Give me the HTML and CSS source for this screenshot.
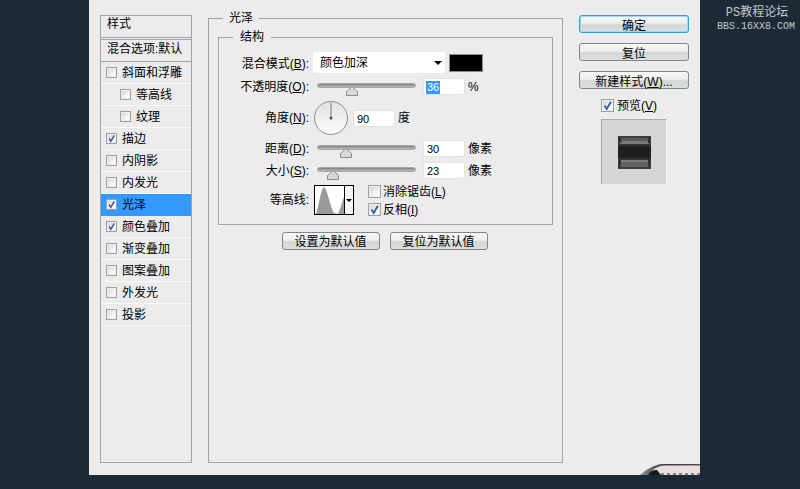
FILE: index.html
```html
<!DOCTYPE html>
<html lang="zh">
<head>
<meta charset="utf-8">
<title>图层样式</title>
<link rel="stylesheet" href="styles.css">
</head>
<body>
<svg class="defs" width="0" height="0" aria-hidden="true">
  <symbol id="tick" viewBox="0 0 13 13"><path d="M3 6.5 L5.6 10.5 L10.5 2" fill="none" stroke="#3f5aa5" stroke-width="2.2"/></symbol>
  <symbol id="thumb" viewBox="0 0 12 10"><path d="M6 .5 L11.5 5.5 V9.5 H.5 V5.5 Z" fill="#d8d8d8" stroke="#8a8a8a"/></symbol>
</svg>
<main class="dialog">
  <nav class="styles">
    <div class="styles-title">样式</div>
    <div class="styles-blend">混合选项:默认</div>
    <div class="style-row"><span class="check"></span>斜面和浮雕</div>
    <div class="style-row sub"><span class="check"></span>等高线</div>
    <div class="style-row sub"><span class="check"></span>纹理</div>
    <div class="style-row"><span class="check"><svg><use href="#tick"/></svg></span>描边</div>
    <div class="style-row"><span class="check"></span>内阴影</div>
    <div class="style-row"><span class="check"></span>内发光</div>
    <div class="style-row active"><span class="check"><svg><use href="#tick"/></svg></span>光泽</div>
    <div class="style-row"><span class="check"><svg><use href="#tick"/></svg></span>颜色叠加</div>
    <div class="style-row"><span class="check"></span>渐变叠加</div>
    <div class="style-row"><span class="check"></span>图案叠加</div>
    <div class="style-row"><span class="check"></span>外发光</div>
    <div class="style-row"><span class="check"></span>投影</div>
  </nav>

  <section class="outer">
    <h2 class="legend legend-outer">光泽</h2>
    <div class="inner">
      <h3 class="legend legend-inner">结构</h3>
      <div class="row row-mode">
        <label class="lbl">混合模式(<u>B</u>):</label>
        <div class="select">颜色加深<span class="caret"></span></div>
        <span class="swatch"></span>
      </div>
      <div class="row row-opacity">
        <label class="lbl">不透明度(<u>O</u>):</label>
        <div class="slider"><svg class="thumb" style="left:28px"><use href="#thumb"/></svg></div>
        <div class="field"><span class="sel">36</span></div>
        <span class="unit">%</span>
      </div>
      <div class="row row-angle">
        <label class="lbl">角度(<u>N</u>):</label>
        <svg class="dial" width="36" height="36" viewBox="0 0 36 36">
          <defs><linearGradient id="dg" x1="0" y1="0" x2="0" y2="1"><stop offset="0" stop-color="#e2e2e2"/><stop offset="1" stop-color="#fdfdfd"/></linearGradient></defs>
          <circle cx="18" cy="18" r="16.5" fill="url(#dg)" stroke="#8f8f8f"/>
          <path d="M18 18 V3" stroke="#777" stroke-width="1"/>
          <circle cx="18" cy="18" r="1.6" fill="#555"/>
        </svg>
        <div class="field field-angle">90</div>
        <span class="unit">度</span>
      </div>
      <div class="row row-distance">
        <label class="lbl">距离(<u>D</u>):</label>
        <div class="slider"><svg class="thumb" style="left:22px"><use href="#thumb"/></svg></div>
        <div class="field">30</div>
        <span class="unit">像素</span>
      </div>
      <div class="row row-size">
        <label class="lbl">大小(<u>S</u>):</label>
        <div class="slider"><svg class="thumb" style="left:9px"><use href="#thumb"/></svg></div>
        <div class="field">23</div>
        <span class="unit">像素</span>
      </div>
      <div class="row row-contour">
        <label class="lbl">等高线:</label>
        <div class="contour">
          <svg class="contour-graph" width="29" height="28" viewBox="0 0 29 28"><path d="M1 28 C4 20 6 2 9 1 C12 2 15 20 19 27 L23 28 C25 24 27 16 29 11 V28 Z" fill="#9b9b9b"/></svg>
          <span class="contour-drop"><span class="caret caret-small"></span></span>
        </div>
        <div class="checks">
          <div class="check-line"><span class="check"></span><span>消除锯齿(<u>L</u>)</span></div>
          <div class="check-line"><span class="check"><svg><use href="#tick"/></svg></span><span>反相(<u>I</u>)</span></div>
        </div>
      </div>
    </div>
    <div class="defaults">
      <button class="btn">设置为默认值</button>
      <button class="btn">复位为默认值</button>
    </div>
  </section>

  <aside class="actions">
    <button class="btn btn-primary">确定</button>
    <button class="btn">复位</button>
    <button class="btn">新建样式(<u>W</u>)...</button>
    <div class="preview-line"><span class="check"><svg><use href="#tick"/></svg></span><span>预览(<u>V</u>)</span></div>
    <div class="preview">
      <svg width="33" height="33" viewBox="0 0 33 33">
        <rect width="33" height="33" fill="#3c3c3c"/>
        <rect x="3" y="2" width="27" height="3" fill="#5a5a5a"/>
        <rect x="2" y="5" width="29" height="3" fill="#7a7a7a"/>
        <rect x="1" y="8" width="31" height="2" fill="#333"/>
        <rect x="0" y="10" width="33" height="12" fill="#1f1f1f"/>
        <rect x="1" y="22" width="31" height="2" fill="#333"/>
        <rect x="2" y="24" width="29" height="2" fill="#7c7c7c"/>
        <rect x="3" y="26" width="27" height="5" fill="#636363"/>
        <path d="M1 1 L3 7 M32 1 L30 7 M1 29 L3 23 M32 29 L30 23" stroke="#222" fill="none"/>
      </svg>
    </div>
  </aside>

  <svg class="corner" width="60" height="11" viewBox="0 0 60 11">
    <defs><linearGradient id="cg" x1="0" y1="0" x2="1" y2="0"><stop offset="0" stop-color="#8d8d8d"/><stop offset=".4" stop-color="#3c3c3c"/><stop offset="1" stop-color="#555"/></linearGradient></defs>
    <path d="M0 11 C6 6 13 1 22 0 H60 V11 Z" fill="url(#cg)"/>
    <path d="M8 11 C12 6 17 2 24 1.5 H60 V11 Z" fill="#ebe0e1"/>
    <path d="M8 11 C10 7 13 6 17 6 L21 11 Z" fill="#121a22"/>
    <path d="M21 10 H60" stroke="#86808a" stroke-width="2" stroke-dasharray="3 3"/>
  </svg>
</main>
<div class="mark">
  <div class="mark-a">PS教程论坛</div>
  <div class="mark-b">BBS.16XX8.COM</div>
</div>
</body>
</html>
```
FILE: styles.css
```css
* { box-sizing: border-box; }
html, body { height: 100%; }
body {
  margin: 0;
  padding-left: 89px;
  display: flex;
  align-items: flex-start;
  background: #1c2a35;
  color: #000;
  font: 12px/14px "Liberation Sans", "Noto Sans CJK SC", sans-serif;
  overflow: hidden;
}
.defs { position: absolute; }
u { text-decoration: underline; }

.dialog {
  position: relative;
  width: 611px;
  height: 475px;
  padding: 15px 11px 0 11px;
  background: #ececec;
  display: flex;
  align-items: flex-start;
  gap: 16px;
}

/* left list */
.styles {
  flex: none;
  width: 92px;
  height: 448px;
  border: 1px solid #a3a3a3;
}
.styles-title {
  height: 22px;
  padding: 1px 0 0 6px;
  border-bottom: 1px solid #a3a3a3;
}
.styles-blend {
  height: 23px;
  margin-top: 1px;
  padding: 2px 0 0 6px;
  border-top: 1px solid #a3a3a3;
  border-bottom: 1px solid #a3a3a3;
  white-space: nowrap;
}
.style-row {
  height: 22px;
  padding-left: 5px;
  display: flex;
  align-items: center;
  gap: 5px;
  border-bottom: 1px solid #fafafa;
}
.style-row.sub { padding-left: 19px; }
.style-row.active { background: #3399ff; border-bottom-color: #3399ff; }

.check {
  flex: none;
  width: 13px;
  height: 13px;
  border: 1px solid #a0a0a0;
  background: linear-gradient(135deg, #cfcfcf, #fcfcfc 75%);
  box-shadow: inset 0 0 0 1px #eeeeee;
  display: inline-block;
}
.check svg { display: block; width: 100%; height: 100%; }
.style-row .check { width: 11px; height: 11px; }

/* main */
.outer {
  position: relative;
  flex: none;
  width: 355px;
  height: 445px;
  margin-top: 3px;
  padding: 18px 9px 0;
  border: 1px solid #a3a3a3;
}
.legend {
  position: absolute;
  top: -8px;
  margin: 0;
  padding: 0 7px;
  font-size: 12px;
  font-weight: normal;
  line-height: 14px;
  background: #ececec;
}
.legend-outer { left: 14px; padding: 0 6px; }
.legend-inner { left: 14px; }
.inner {
  position: relative;
  height: 188px;
  padding-top: 14px;
  border: 1px solid #a3a3a3;
}
.row { display: flex; align-items: center; }
.lbl { flex: none; width: 90px; text-align: right; white-space: nowrap; }
.row-mode { height: 21px; }
.row-mode .lbl { padding-top: 2px; }
.row-opacity { height: 17px; margin-top: 5px; }
.row-angle { height: 36px; margin-top: 5px; }
.row-distance { height: 17px; margin-top: 4px; }
.row-size { height: 17px; margin-top: 5px; }
.row-contour { height: 30px; margin-top: 6px; align-items: flex-start; }
.row-contour .lbl { margin-top: 8px; }

.select {
  position: relative;
  width: 132px;
  height: 21px;
  margin-left: 4px;
  padding: 4px 0 0 7px;
  background: #fff;
  border-radius: 2px;
}
.caret {
  position: absolute;
  right: 3px;
  top: 9px;
  width: 0;
  height: 0;
  border-left: 4px solid transparent;
  border-right: 4px solid transparent;
  border-top: 4px solid #000;
}
.caret-small { right: 1px; top: 13px; border-left-width: 3px; border-right-width: 3px; border-top-width: 3px; }
.swatch {
  width: 34px;
  height: 18px;
  margin-left: 4px;
  background: #000;
  border: 1px solid #8c8c8c;
}

.slider {
  position: relative;
  flex: none;
  width: 99px;
  height: 5px;
  margin: -2px 7px 0 8px;
  border-radius: 3px;
  background: linear-gradient(#7f7f7f, #bdbdbd);
  border: 1px solid #a8a8a8;
}
.thumb { position: absolute; top: 2px; width: 12px; height: 10px; }

.field {
  flex: none;
  width: 42px;
  height: 17px;
  padding: 2px 0 0 3px;
  background: #fff;
  border: 1px solid #e2e2e2;
  border-radius: 2px;
  font-size: 11px;
  line-height: 13px;
}
.field-angle { margin-left: 4px; }
.sel { background: #3399ff; color: #fff; display: inline-block; padding: 0 1px; margin-left: -1px; }
.unit { margin-left: 3px; white-space: nowrap; }
.dial { flex: none; margin-left: 4px; }

.contour {
  position: relative;
  flex: none;
  width: 40px;
  height: 30px;
  margin-left: 5px;
  background: #fff;
  border: 1px solid #000;
  display: flex;
}
.contour-graph { flex: none; display: block; }
.contour-drop {
  position: relative;
  flex: 1;
  background: #f4f4f4;
  border-left: 1px solid #000;
}
.checks { margin-left: 14px; display: flex; flex-direction: column; gap: 5px; }
.check-line { display: flex; align-items: center; gap: 2px; height: 13px; white-space: nowrap; }

.defaults { display: flex; justify-content: center; gap: 10px; margin-top: 7px; padding-right: 2px; }
.defaults .btn { padding-top: 1px; }

.btn {
  height: 18px;
  width: 98px;
  padding: 0;
  font: inherit;
  color: #000;
  border: 1px solid #858585;
  border-radius: 3px;
  background: linear-gradient(#f8f8f8 0, #eeeeee 45%, #d3d6d6 55%, #dcdfdf 100%);
  white-space: nowrap;
}

/* right */
.actions {
  flex: none;
  width: 110px;
  display: flex;
  flex-direction: column;
  gap: 10px;
}
.actions .btn { width: 110px; padding-top: 3px; }
.btn-primary {
  border: 1px solid #2a9fdc;
  box-shadow: inset 0 0 0 1px #9fd8f4;
}
.preview-line {
  display: flex;
  align-items: center;
  gap: 3px;
  height: 13px;
  margin-left: 22px;
  white-space: nowrap;
}
.preview {
  width: 66px;
  height: 65px;
  margin: -3px 0 0 22px;
  background: #d6d6d6;
  border-top: 1px solid #ababab;
  border-left: 1px solid #ababab;
  border-right: 1px solid #f6f6f6;
  display: flex;
  align-items: center;
  justify-content: center;
}
.preview svg { display: block; }

.corner { position: absolute; right: 0; bottom: 0; display: block; }

/* watermark */
.mark { flex: none; width: 100px; padding: 7px 0 0 14px; text-align: center; color: #c4c8ca; line-height: 13px; white-space: nowrap; }
.mark-a { font: 12px/13px "Liberation Mono", "Noto Sans CJK SC", monospace; }
.mark-b { font: 10px/13px "Liberation Mono", monospace; margin-left: -2px; }
```
